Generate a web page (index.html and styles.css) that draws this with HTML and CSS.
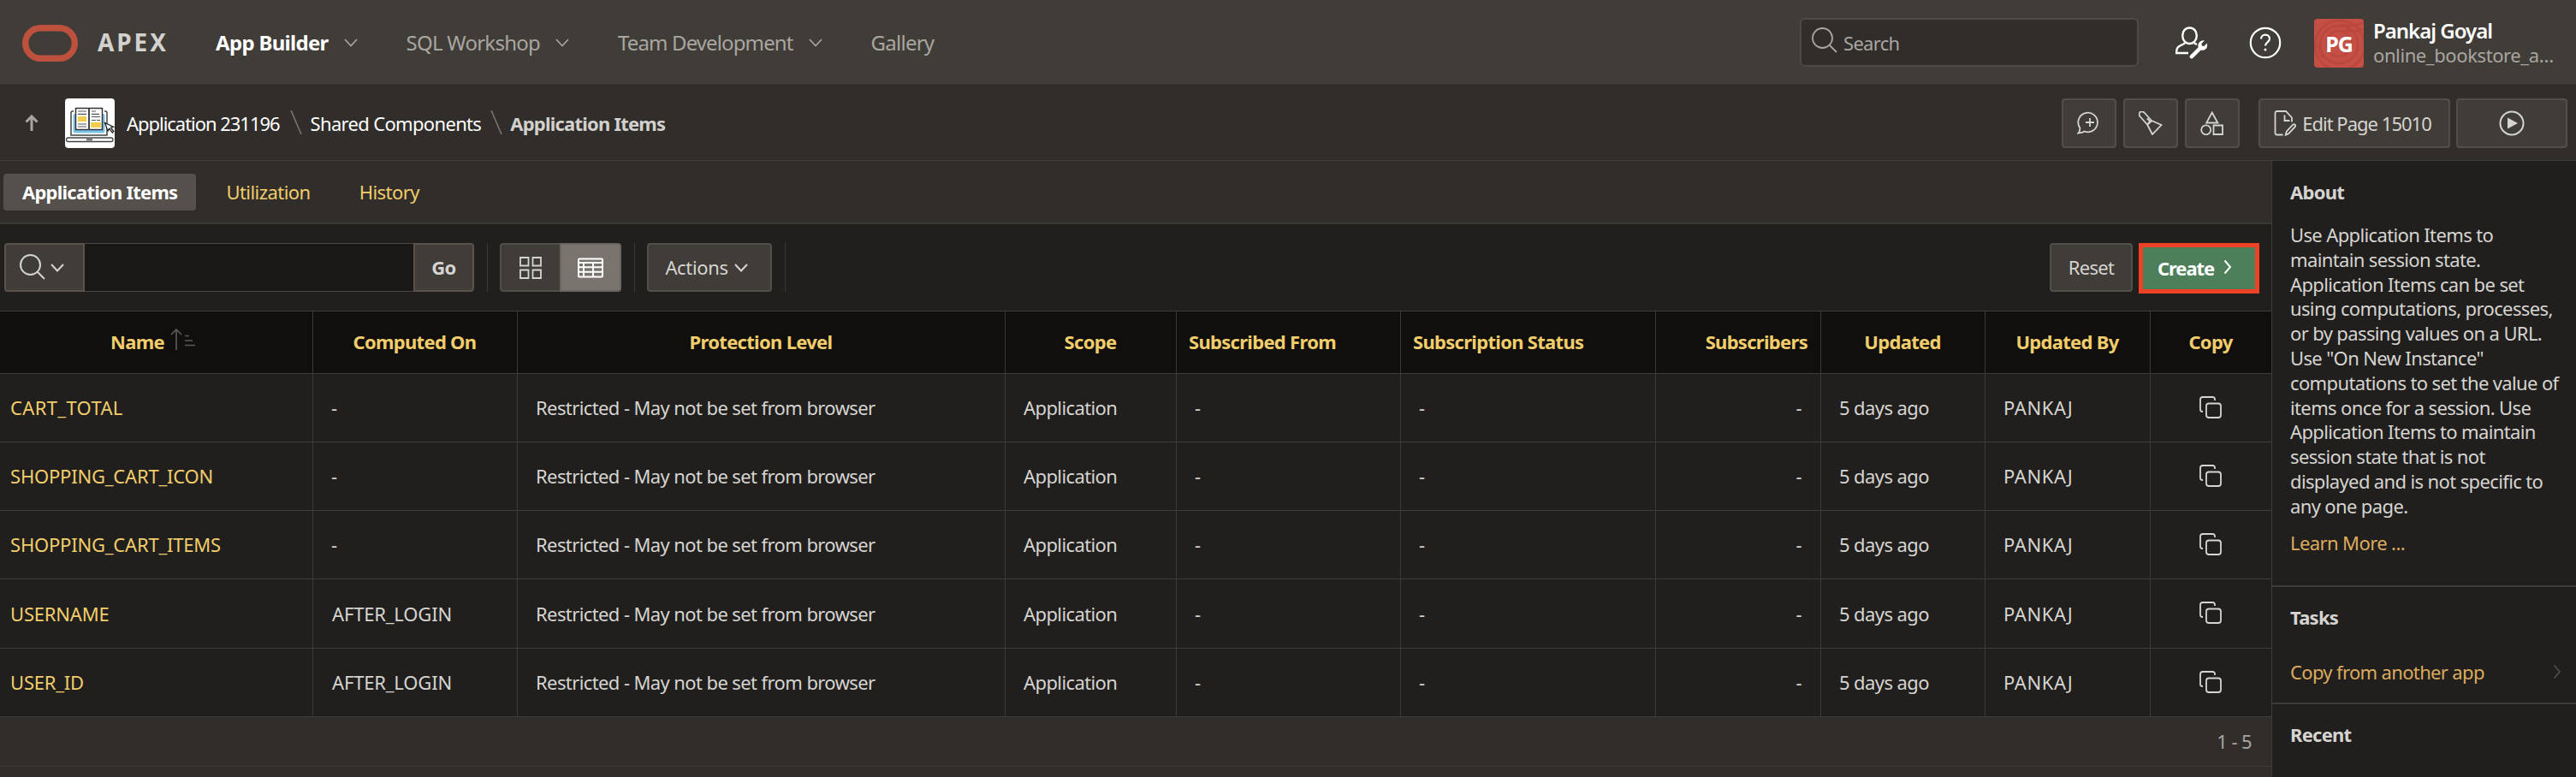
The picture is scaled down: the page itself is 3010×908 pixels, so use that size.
FILE: index.html
```
<!DOCTYPE html>
<html lang="en">
<head>
<meta charset="utf-8">
<title>Application Items</title>
<link rel="stylesheet" href="styles.css">
</head>
<body>
<svg class="defs" aria-hidden="true">
  <symbol id="chev" viewBox="0 0 16 10"><path d="M1 1l7 7.5L15 1"/></symbol>
  <symbol id="chev-r" viewBox="0 0 10 18"><path d="M1.500 1.500L8 9l-6.500 7.500"/></symbol>
  <symbol id="lens" viewBox="0 0 30 30"><circle cx="12.500" cy="12.500" r="11.500"/><path d="M20.500 20.500L29 29"/></symbol>
  <symbol id="copy" viewBox="0 0 26 26"><path d="M4 18H3.500A2.500 2.500 0 0 1 1 15.500V4a3 3 0 0 1 3-3h11.500A2.500 2.500 0 0 1 18 3.500V5"/><rect x="8" y="8.500" width="17" height="16.500" rx="3"/></symbol>
</svg>

<header class="top">
  <a class="brand">
    <svg class="oracle" viewBox="0 0 65 43"><rect x="3.700" y="3.700" width="57.600" height="35.600" rx="17.800"/></svg>
    <span class="brand-name">APEX</span>
  </a>
  <nav class="nav">
    <a class="nav-item active"><span>App Builder</span><svg class="chev"><use href="#chev"/></svg></a>
    <a class="nav-item"><span>SQL Workshop</span><svg class="chev"><use href="#chev"/></svg></a>
    <a class="nav-item"><span>Team Development</span><svg class="chev"><use href="#chev"/></svg></a>
    <a class="nav-item"><span>Gallery</span></a>
  </nav>
  <div class="search"><svg class="lens"><use href="#lens"/></svg><span>Search</span></div>
  <svg class="admin" viewBox="0 0 38 38">
    <path d="M16.500 1.500c5 0 8.300 4 8.300 9 0 5.200-3.500 9.500-8.300 9.500s-8.300-4.300-8.300-9.500c0-5 3.300-9 8.300-9z"/>
    <path d="M11 19.500l-7 3.800C1.600 24.800 1 27 1.200 31H15M22 19.500l3 1.500"/>
    <path class="solid" d="M34 16.300l-3.600 3.600.5 2.500 2.500.5 3.300-3.500c1 3.400.2 5.800-1.600 7.200-1.700 1.300-3.600 1.400-5.300.9l-9.100 9.100c-1.200 1.200-2.700 1-3.500.2-.9-.9-.9-2.300.2-3.400l9.300-9.200c-1.300-4.600 2.300-8.800 7.300-7.900z"/>
  </svg>
  <svg class="help" viewBox="0 0 38 38"><circle cx="19" cy="19" r="17.200"/><path d="M14 14.500c0-3 2.200-4.900 5-4.900s5 1.900 5 4.700c0 4-5 4.200-5 8.200"/><circle class="solid" cx="19" cy="27" r="1.500"/></svg>
  <div class="account">
    <div class="avatar">
      <svg class="rings" viewBox="0 0 58 57"><circle cx="29" cy="29" r="15"/><circle cx="29" cy="30" r="22"/><circle cx="30" cy="31" r="29"/><path d="M30 6c8 4 18 2 28-1M36 13c8 3 14 2 22-1M0 30c7-1 6 9 10 16"/></svg>
      <span>PG</span>
    </div>
    <div class="who"><div class="user">Pankaj Goyal</div><div class="space">online_bookstore_a…</div></div>
  </div>
</header>

<div class="crumbs">
  <svg class="up" viewBox="0 0 16 20"><path d="M8 19V2M1.500 8.500L8 2l6.500 6.500"/></svg>
  <svg class="app-icon" viewBox="0 0 58 58">
    <rect width="58" height="58" rx="4" fill="#fff" stroke="none"/>
    <path d="M10 15H9a2 2 0 0 0-2 2v26h42V17a2 2 0 0 0-2-2h-1" fill="none" stroke="#444" stroke-width="1.500"/>
    <rect x="9.500" y="18" width="37" height="22.500" rx="2" fill="#7cc4ea" stroke="none"/>
    <rect x="12.500" y="11.500" width="31" height="25" fill="#fff" stroke="#333" stroke-width="1.500"/>
    <path d="M28 12v25" stroke="#3c4a58" stroke-width="2"/>
    <rect x="15" y="21" width="10" height="6" fill="#f3cb4d" stroke="none"/><rect x="30" y="28" width="12" height="6" fill="#f3cb4d" stroke="none"/>
    <path d="M15 15h10M15 18.300h10M15 30h10M15 33h10M31 15h5M31 18.300h9M31 21.500h10M31 25.500h5M37 25.500h4" stroke="#555" stroke-width="1.200"/>
    <rect x="1.500" y="46" width="54.500" height="4.500" rx="2.200" fill="#fff" stroke="#444" stroke-width="1.300"/>
    <rect x="25" y="46.500" width="7" height="3" fill="#777" stroke="none"/>
    <path d="M46.500 28.500l3.500 9.500 1.700-2.600 3.600 4.600 1.600-1.500-3.400-4.300 3-1z" fill="#fff" stroke="#222" stroke-width="1.300"/>
  </svg>
  <a class="crumb">Application 231196</a>
  <svg class="slash" viewBox="0 0 14 28"><path d="M1 0l12 28"/></svg>
  <a class="crumb wide">Shared Components</a>
  <svg class="slash second" viewBox="0 0 14 28"><path d="M1 0l12 28"/></svg>
  <span class="crumb current">Application Items</span>
  <div class="page-tools">
    <button class="btn icon"><svg class="i28" viewBox="0 0 28 28"><path d="M3.400 19.500A11.300 11.300 0 1 1 8.500 23.500L6.500 24.600 1.500 25.500c1.300-1.500 2-3.400 1.900-6zM15 8v10M10 13h10"/></svg></button>
    <button class="btn icon"><svg class="i28" viewBox="0 0 28 28"><path d="M1.300 1.300C3 0 5 0 6.500 1.500L14.700 10.700 10 15.500 1.500 6C.4 4.500.2 2.800 1.300 1.300zM14.700 10.700L26.500 16 16 27 10 15.500M12.800 11.500l-3-3.200M11 15l4-3.600"/></svg></button>
    <button class="btn icon"><svg class="i28" viewBox="0 0 28 28"><path d="M13.700 1.500L20.400 13.500H7.200zM15.500 16.500H26V27H15.500z"/><circle cx="6.700" cy="21.800" r="5.500"/></svg></button>
    <button class="btn edit"><svg class="page" viewBox="0 0 26 30"><path d="M10.500 28.500H3.500a2 2 0 0 1-2-2V3a2 2 0 0 1 2-2H14l7 7.500v5M12.500 5.500v6.500h6M13.700 28.700l1-4 7.500-8c1.800-1.300 3.800.5 2.500 2.500l-7.500 8z"/></svg><span>Edit Page 15010</span></button>
    <button class="btn run"><svg class="play" viewBox="0 0 30 30"><circle cx="15" cy="15" r="13.500"/><path class="solid" d="M10 8.500L22 15 10 21.500z"/></svg></button>
  </div>
</div>

<div class="body">
  <main class="main">
    <nav class="tabs"><a class="tab on">Application Items</a><a class="tab">Utilization</a><a class="tab">History</a></nav>
    <div class="toolbar">
      <div class="finder">
        <button class="btn pick"><svg class="lens"><use href="#lens"/></svg><svg class="chev"><use href="#chev"/></svg></button>
        <div class="field"></div>
        <button class="btn go">Go</button>
      </div>
      <i class="rule"></i>
      <div class="views">
        <button class="btn grid"><svg class="i28" viewBox="0 0 28 28"><path d="M2 2h9.500v9.500H2zM16.500 2H26v9.500h-9.500zM2 16.500h9.500V26H2zM16.500 16.500H26V26h-9.500z"/></svg></button>
        <button class="btn list"><svg class="rep" viewBox="0 0 30 24"><rect x="1" y="1.500" width="28" height="21" rx="1"/><path d="M1 6h28M1 11.300h28M1 16.800h28M7 6v16.500M18 6v16.500"/></svg></button>
      </div>
      <i class="rule"></i>
      <button class="btn actions"><span>Actions</span><svg class="chev"><use href="#chev"/></svg></button>
      <i class="rule"></i>
      <button class="btn reset">Reset</button>
      <button class="create"><span>Create</span><svg class="chev-r"><use href="#chev-r"/></svg></button>
    </div>
    <table class="report">
      <colgroup><col class="c1"><col class="c2"><col class="c3"><col class="c4"><col class="c5"><col class="c6"><col class="c7"><col class="c8"><col class="c9"><col class="c10"></colgroup>
      <thead><tr>
        <th class="name"><span class="sorted">Name<svg class="sort" viewBox="0 0 29 26"><path d="M7 25V1M1 7l6-6 6 6M17 8.500h5M17 14h9M17 19.500h12"/></svg></span></th>
        <th>Computed On</th><th>Protection Level</th><th>Scope</th><th class="l">Subscribed From</th><th class="l">Subscription Status</th><th class="r">Subscribers</th><th>Updated</th><th>Updated By</th><th>Copy</th>
      </tr></thead>
      <tbody>
        <tr><td class="wide-caps"><a>CART_TOTAL</a></td><td>-</td><td>Restricted - May not be set from browser</td><td>Application</td><td>-</td><td>-</td><td class="r">-</td><td>5 days ago</td><td class="by">PANKAJ</td><td class="cp"><svg class="copy"><use href="#copy"/></svg></td></tr>
        <tr><td><a>SHOPPING_CART_ICON</a></td><td>-</td><td>Restricted - May not be set from browser</td><td>Application</td><td>-</td><td>-</td><td class="r">-</td><td>5 days ago</td><td class="by">PANKAJ</td><td class="cp"><svg class="copy"><use href="#copy"/></svg></td></tr>
        <tr><td><a>SHOPPING_CART_ITEMS</a></td><td>-</td><td>Restricted - May not be set from browser</td><td>Application</td><td>-</td><td>-</td><td class="r">-</td><td>5 days ago</td><td class="by">PANKAJ</td><td class="cp"><svg class="copy"><use href="#copy"/></svg></td></tr>
        <tr class="tall"><td><a>USERNAME</a></td><td class="caps">AFTER_LOGIN</td><td>Restricted - May not be set from browser</td><td>Application</td><td>-</td><td>-</td><td class="r">-</td><td>5 days ago</td><td class="by">PANKAJ</td><td class="cp"><svg class="copy"><use href="#copy"/></svg></td></tr>
        <tr><td><a>USER_ID</a></td><td class="caps">AFTER_LOGIN</td><td>Restricted - May not be set from browser</td><td>Application</td><td>-</td><td>-</td><td class="r">-</td><td>5 days ago</td><td class="by">PANKAJ</td><td class="cp"><svg class="copy"><use href="#copy"/></svg></td></tr>
      </tbody>
    </table>
    <div class="pager">1 - 5</div>
  </main>
  <aside class="side">
    <section class="about">
      <h2>About</h2>
      <p>Use Application Items to<br>maintain session state.<br>Application Items can be set<br>using computations, processes,<br>or by passing values on a URL.<br>Use "On New Instance"<br>computations to set the value of<br>items once for a session. Use<br>Application Items to maintain<br>session state that is not<br>displayed and is not specific to<br>any one page.</p>
      <a class="more">Learn More ...</a>
    </section>
    <section class="tasks">
      <h2>Tasks</h2>
      <a class="task"><span>Copy from another app</span><svg class="chev-r"><use href="#chev-r"/></svg></a>
    </section>
    <section class="recent"><h2>Recent</h2></section>
  </aside>
</div>
</body>
</html>
```
FILE: styles.css
```
* { box-sizing: border-box; }
html, body { height: 908px; overflow: hidden; }
body {
  margin: 0;
  display: flex;
  flex-direction: column;
  background: #312d2a;
  color: #d6d4d1;
  font: 22px/29px "Noto Sans", "Open Sans", sans-serif;
  letter-spacing: -0.6px;
}
svg { fill: none; stroke: currentColor; stroke-width: 2; flex: none; display: block; }
.defs { display: none; }
.solid { fill: currentColor; stroke: none; }
.chev { width: 16px; height: 10px; }
.chev-r { width: 10px; height: 18px; }
.lens { width: 30px; height: 30px; }

/* top bar */
.top { height: 99px; flex: none; display: flex; align-items: center; background: #403c37; border-bottom: 1px solid #3a3632; }
.brand { display: flex; align-items: center; margin-left: 26px; width: 226px; gap: 23px; }
.oracle { width: 65px; height: 43px; color: #bd513e; stroke-width: 7.400; position: relative; top: 1px; }
.brand-name { font-size: 28px; font-weight: 700; letter-spacing: 2.900px; color: #d3d1ce; padding-top: 1px; }
.nav { display: flex; align-items: center; gap: 57px; font-size: 24px; color: #a9a6a2; letter-spacing: -0.750px; padding-top: 1px; }
.nav-item { display: flex; align-items: center; gap: 18px; }
.nav-item:nth-child(3) { letter-spacing: -0.880px; }
.nav-item .chev { stroke-width: 1.600; color: #a9a6a2; }
.active { color: #fff; font-weight: 700; letter-spacing: -0.700px; }
.search { margin-left: auto; width: 396px; height: 57px; border: 2px solid #4d4944; border-radius: 6px; background: #312d2a; color: #a9a6a2; display: flex; align-items: center; gap: 7px; padding-left: 12px; font-size: 22px; letter-spacing: -0.700px; padding-top: 2px; }
.search .lens { margin-top: -6px; stroke-width: 1.800; }
.admin, .help { width: 38px; height: 38px; color: #fff; position: relative; top: 1px; }
.admin { margin-left: 43px; stroke-width: 2.400; }
.help { margin-left: 48px; stroke-width: 2.200; }
.account { display: flex; align-items: center; gap: 11px; margin-left: 38px; width: 306px; padding-top: 2px; }
.avatar { width: 58px; height: 57px; border-radius: 4px; overflow: hidden; background: #c54f44; display: grid; place-items: center; position: relative; color: #fff; font-size: 25px; font-weight: 700; letter-spacing: -1px; }
.rings { position: absolute; inset: 0; color: #b4463b; stroke-width: 2.500; opacity: .75; }
.avatar span { position: relative; top: 1px; }
.who { white-space: nowrap; }
.user { font-size: 24px; font-weight: 600; color: #fff; letter-spacing: -1px; }
.space { color: #a9a6a2; letter-spacing: -0.400px; }

/* breadcrumb bar */
.crumbs { height: 89px; flex: none; display: flex; align-items: center; border-bottom: 1px solid #403c38; padding: 1px 10px 0 29px; color: #fff; }
.up { width: 16px; height: 20px; color: #a9a6a2; stroke-width: 3; }
.app-icon { width: 58px; height: 58px; margin: 0 14px 0 31px; }
.crumb { letter-spacing: -1.030px; position: relative; top: 1px; }
.crumb.wide { letter-spacing: -0.670px; }
.crumb.current { font-weight: 700; letter-spacing: -0.780px; color: #d3d1ce; }
.slash { width: 14px; height: 28px; color: #78746f; margin: 0 10px 0 12px; stroke-width: 1.600; position: relative; top: -1px; }
.slash.second { margin: 0 9px 0 11px; }
.page-tools { display: flex; margin-left: auto; gap: 8px; }
.btn { font: inherit; letter-spacing: inherit; color: #d6d4d1; background: #403c37; border: 2px solid #524e49; border-radius: 4px; height: 57px; padding: 0; display: flex; align-items: center; justify-content: center; white-space: nowrap; }
.page-tools .btn { height: 58px; }
.icon { width: 64px; }
.i28 { width: 28px; height: 28px; stroke-width: 1.800; }
.edit { width: 224px; margin-left: 14px; gap: 7px; letter-spacing: -0.980px; padding-right: 4px; }
.edit span { padding-top: 2px; }
.page { width: 26px; height: 30px; stroke-width: 1.800; }
.run { width: 130px; margin-left: -1px; }
.play { width: 30px; height: 30px; }

/* main column */
.body { flex: 1; display: flex; min-height: 0; }
.main { width: 2654px; }
.tabs { height: 74px; border-bottom: 2px solid #3b3834; display: flex; align-items: center; padding-left: 4px; padding-top: 1px; gap: 14px; color: #f2cd6b; }
.tab { height: 43px; line-height: 43px; padding: 0 22px 0 21px; border-radius: 4px; letter-spacing: -0.550px; }
.on { background: #55504b; color: #fff; font-weight: 700; padding: 0 22px; letter-spacing: -0.760px; }
.toolbar { height: 101px; background: #201f1d; display: flex; align-items: center; padding: 0 14px 0 5px; }
.finder { display: flex; width: 549px; }
.pick { width: 94px; gap: 6px; border-radius: 4px 0 0 4px; border-color: #5a524b; padding-right: 6px; }
.pick .lens { margin: -2px 0 0 0; }
.field { flex: 1; height: 57px; background: #191816; border: solid #4a4641; border-width: 1px 0; }
.go { width: 71px; border-radius: 0 4px 4px 0; font-weight: 700; border-color: #5a524b; }
.rule { width: 1px; height: 57px; background: #3b3834; margin: 0 14px 0 15px; }
.views { display: flex; }
.grid { width: 70px; border-radius: 4px 0 0 4px; border-right: 0; }
.list { width: 72px; border-radius: 0 4px 4px 0; background: #7a746f; border-color: #6b6560; color: #fff; }
.rep { width: 30px; height: 24px; }
.actions { width: 146px; gap: 7px; letter-spacing: -0.350px; padding-right: 7px; }
.reset { width: 97px; margin-left: auto; letter-spacing: -0.700px; }
.create { font: inherit; width: 141px; height: 59px; margin: 1px 0 0 7px; border: 5px solid #ee4126; background: #4c7f5a; color: #fff; font-weight: 700; letter-spacing: -1.100px; display: flex; align-items: center; justify-content: center; gap: 11px; padding: 0 10px 0 0; }
.create .chev-r { margin-top: -2px; }

.report { width: 2654px; table-layout: fixed; border-spacing: 0; background: #201f1d; }
.c1 { width: 366px; } .c2 { width: 239px; } .c3 { width: 570px; } .c4 { width: 200px; } .c5 { width: 262px; }
.c6 { width: 298px; } .c7 { width: 193px; } .c8 { width: 192px; } .c9 { width: 193px; } .c10 { width: 141px; }
th, td { border-right: 1px solid #3c3934; border-bottom: 1px solid #3f3c37; white-space: nowrap; }
th:last-child, td:last-child { border-right: 0; }
th { height: 74px; background: #100f0d; color: #f2cd6b; border-top: 1px solid #3f3c37; padding: 0 1px 2px 0; font-weight: 700; letter-spacing: -0.700px; text-align: center; }
th.name { padding-right: 8px; }
th.l { text-align: left; padding-left: 14px; }
th.r { text-align: right; padding-right: 15px; }
.sorted { display: inline-flex; align-items: center; gap: 7px; vertical-align: top; }
.sort { width: 29px; height: 26px; color: #5c5955; stroke-width: 1.700; margin-top: -4px; }
td { height: 80px; padding: 0 22px 0 21px; }
.tall td { height: 81px; }
td.r { text-align: right; }
td:first-child { padding-left: 12px; color: #f2cd6b; letter-spacing: -0.200px; }
td.wide-caps:first-child { letter-spacing: 0.350px; }
td.caps { letter-spacing: -0.170px; padding-left: 22px; }
td.by { letter-spacing: 0.600px; }
td.cp { padding: 0 2px 0 0; }
.copy { width: 26px; height: 26px; margin: 0 auto; stroke-width: 1.800; position: relative; top: -1px; }
.pager { height: 58px; border-bottom: 1px solid #3f3c38; display: flex; align-items: center; justify-content: flex-end; padding-right: 23px; color: #a9a6a2; }

/* right column */
.side { flex: 1; background: #201f1d; border-left: 1px solid #403c38; }
.side section { padding: 0 21px; }
.side h2 { margin: 0; font-size: 22px; line-height: 72px; letter-spacing: -0.750px; }
.side p { margin: 0; line-height: 28.800px; white-space: nowrap; letter-spacing: -0.630px; }
.side .about { height: 498px; border-bottom: 2px solid #403c38; }
.more { display: block; margin-top: 14px; color: #dcab5e; }
.side .tasks { height: 137px; border-bottom: 2px solid #403c38; }
.side .tasks h2, .side .recent h2 { line-height: 71px; }
.task { display: flex; justify-content: space-between; align-items: center; height: 56px; color: #dcab5e; letter-spacing: -0.650px; }
.task .chev-r { color: #55514c; stroke-width: 1.500; margin-right: -3px; }
```
